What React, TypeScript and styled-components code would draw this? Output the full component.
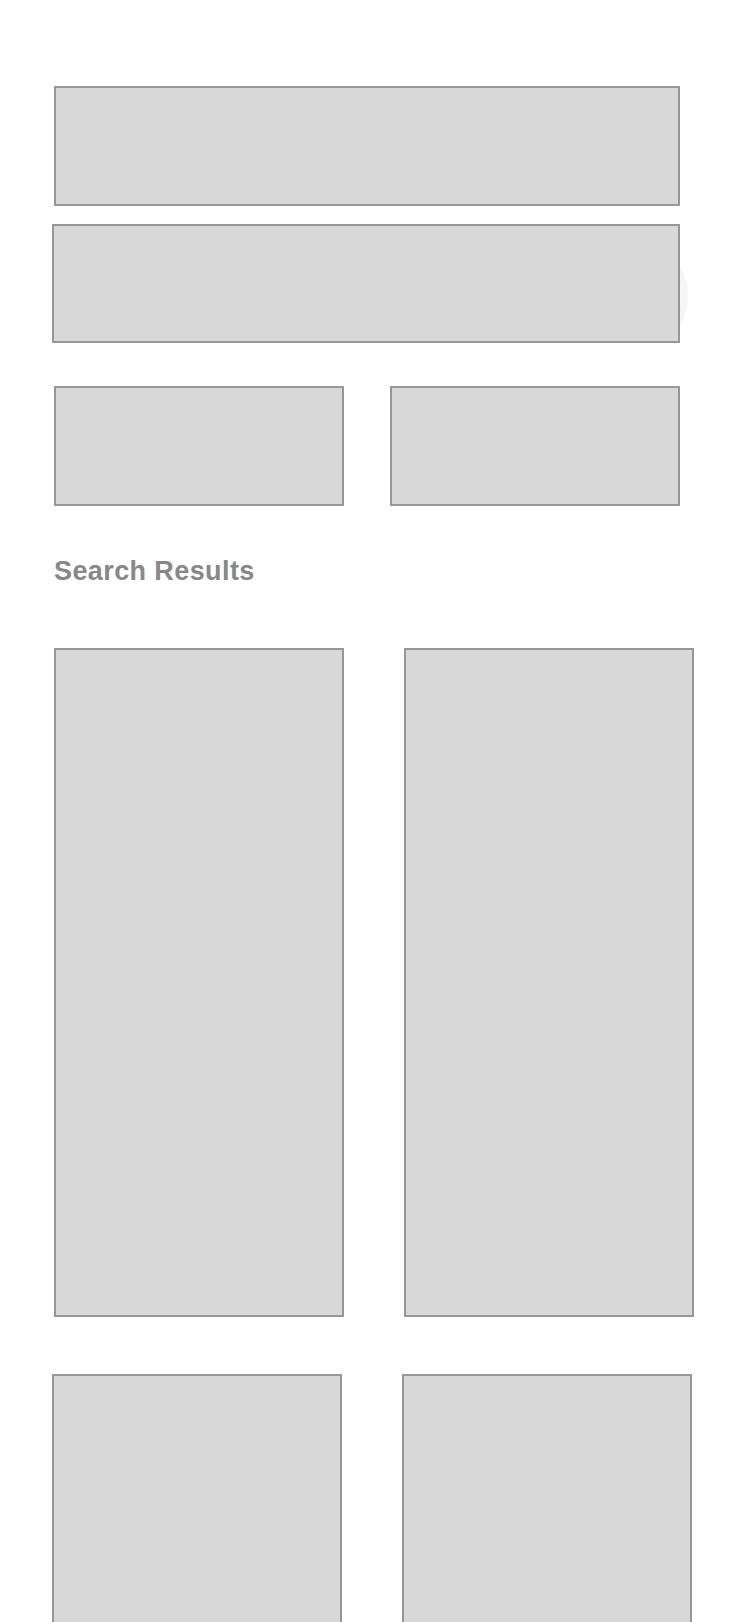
import React from 'react'
import styled, {createGlobalStyle} from 'styled-components'

const GlobalStyle = createGlobalStyle`
  html, body {
    margin: 0;
    padding: 0;
    background: #ffffff;
  }
  body {
    font-family: 'Liberation Sans', Arial, Helvetica, sans-serif;
    overflow: hidden;
  }
`

const Screen = styled.div`
  width: 740px;
  height: 1622px;
  overflow: hidden;
  background: #ffffff;
  padding-top: 86px;
  box-sizing: border-box;
`

const Placeholder = styled.div<{$w: number; $h: number}>`
  box-sizing: border-box;
  width: ${p => p.$w}px;
  height: ${p => p.$h}px;
  background: #d8d8d8;
  border: 2px solid #979797;
`

const Row = styled.div<{$top: number; $left: number; $gap?: number}>`
  display: flex;
  margin-top: ${p => p.$top}px;
  padding-left: ${p => p.$left}px;
  gap: ${p => p.$gap ?? 0}px;
`

const SearchWrap = styled.div`
  position: relative;
  margin-top: 18px;
  margin-left: 52px;
  width: 628px;
  height: 119px;
`

// faint round shape peeking out at the right edge of the search box
const Halo = styled.div`
  position: absolute;
  left: 582px;
  top: 30px;
  width: 54px;
  height: 84px;
  border-radius: 50%;
  background: #f6f6f6;
`

const SearchBox = styled(Placeholder)`
  position: relative;
  z-index: 1;
`

const Title = styled.h2`
  margin: 50px 0 0 54px;
  font-size: 27px;
  line-height: 30px;
  letter-spacing: 0.4px;
  font-weight: 700;
  color: #888888;
`

export default function App() {
  return (
    <>
      <GlobalStyle />
      <Screen>
        <Row $top={0} $left={54}>
          <Placeholder $w={626} $h={120} />
        </Row>
        <SearchWrap>
          <Halo />
          <SearchBox $w={628} $h={119} />
        </SearchWrap>
        <Row $top={43} $left={54} $gap={46}>
          <Placeholder $w={290} $h={120} />
          <Placeholder $w={290} $h={120} />
        </Row>
        <Title>Search Results</Title>
        <Row $top={62} $left={54} $gap={60}>
          <Placeholder $w={290} $h={669} />
          <Placeholder $w={290} $h={669} />
        </Row>
        <Row $top={57} $left={52} $gap={60}>
          <Placeholder $w={290} $h={669} />
          <Placeholder $w={290} $h={669} />
        </Row>
      </Screen>
    </>
  )
}
